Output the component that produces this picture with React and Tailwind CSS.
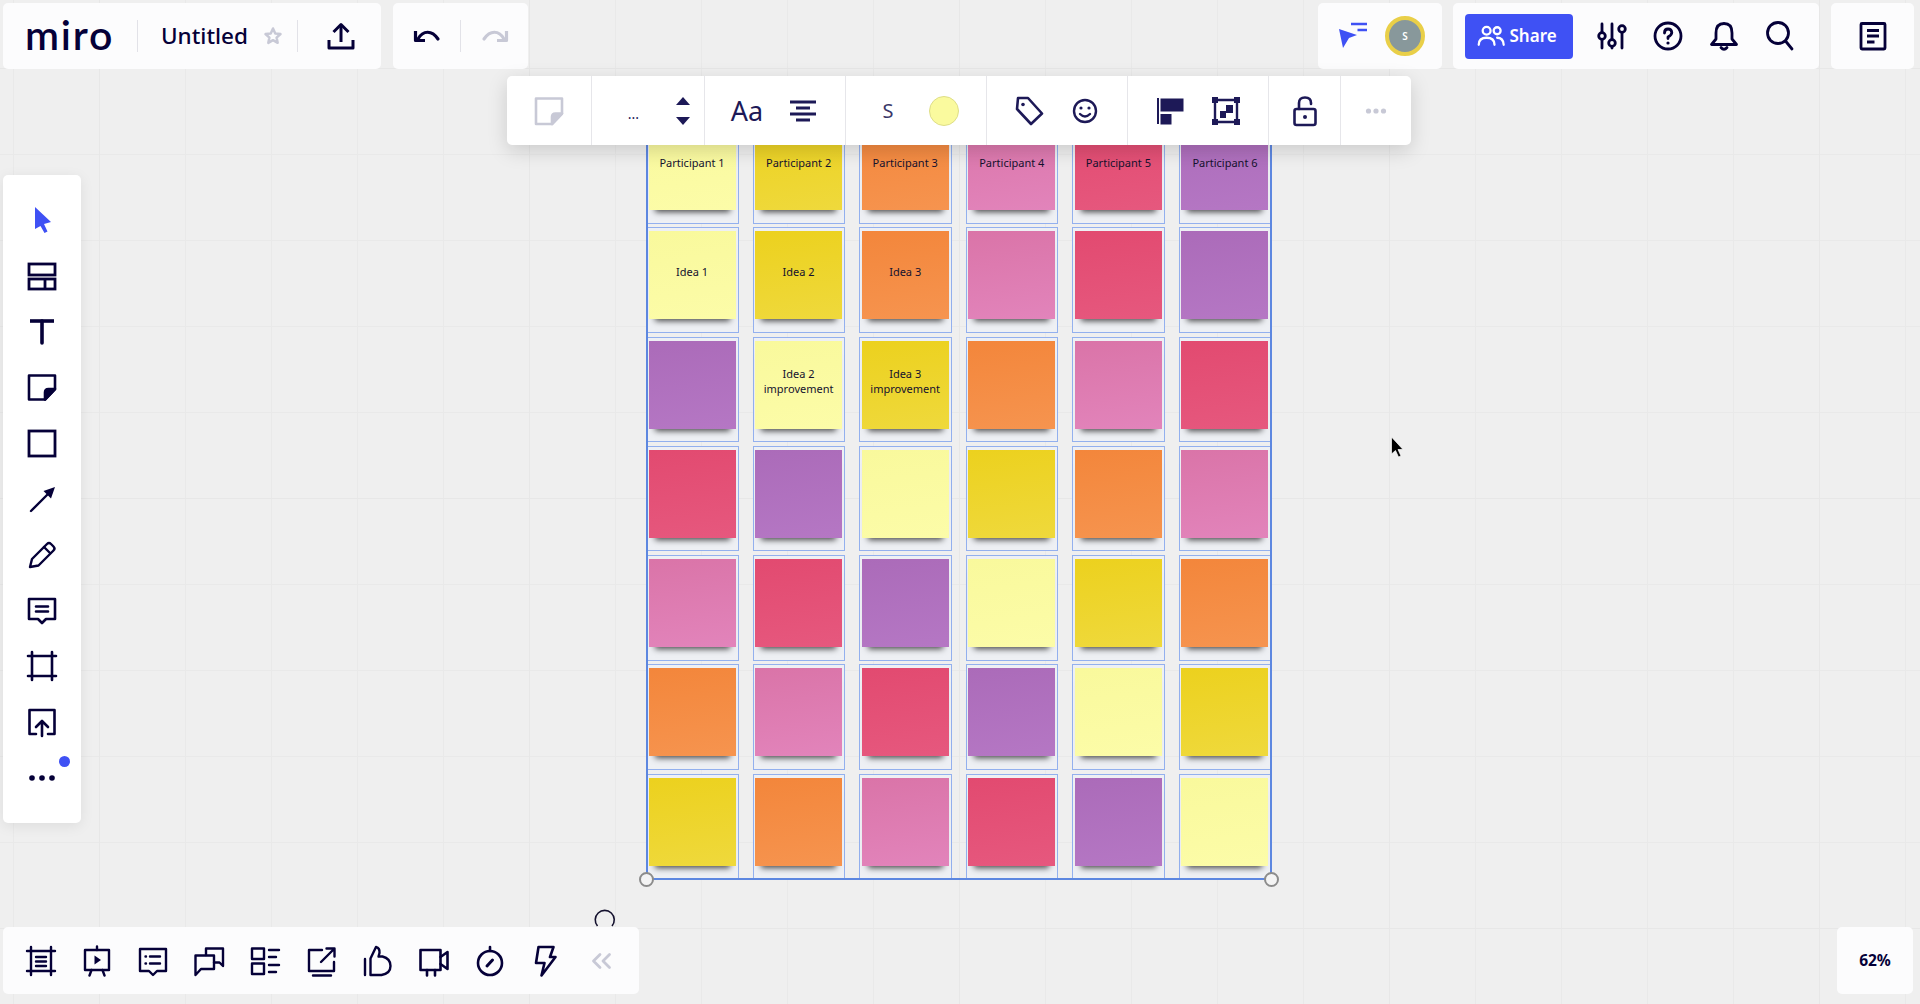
import React from "react";

const Ic = ({ children, size = 32, cls = "", color = "#050038", sw = 2.6 }) => (
  <svg width={size} height={size} viewBox="0 0 32 32" fill="none" stroke={color} strokeWidth={sw} strokeLinecap="round" strokeLinejoin="round" className={"shrink-0 " + cls}>
    {children}
  </svg>
);

const DARK = "#050038";
const BLUE = "#3f51f4";
const CTX = "#1d1957";
const GRAY = "#c8c9d6";

const icons = {
  cursor: <Ic><path d="M9 3 25 18 18 20 21.5 27.5 18.5 29 14.5 22 9 25Z" fill={BLUE} stroke="none" /></Ic>,
  layouts: <Ic sw={2.8}><g strokeLinecap="butt" strokeLinejoin="miter"><rect x="3" y="4" width="26" height="11" /><rect x="3" y="19" width="26" height="10" /><path d="M19 19v10" /></g></Ic>,
  text: <Ic sw={3.6}><g strokeLinecap="butt"><path d="M4 6h24" /><path d="M16 6v22" strokeLinecap="round" /></g></Ic>,
  sticky: <Ic sw={2.6}><path d="M3 4.5h26v13.5L19 28.5H3Z" /><path d="M29 18 19 28.5v-7q0-3.5 3.500-3.500Z" fill={DARK} /></Ic>,
  rect: <Ic sw={2.8}><rect x="3" y="4" width="26" height="25" strokeLinejoin="miter" /></Ic>,
  arrow: <Ic sw={2.4}><path d="M5 28 22 11" /><path d="M29 4 17.500 8 25 15.500Z" fill={DARK} stroke="none" /></Ic>,
  pen: <Ic sw={2.4}><path d="M4 28l2-8L21 5q2-2 4 0l2.500 2.500q2 2 0 4L12.500 26.500Z" /><path d="M18 8l6 6" /></Ic>,
  comment: <Ic sw={2.6}><path d="M3 5h26v20H20l-4 4-4-4H3Z" /><path d="M10 12.500h12M10 17.500h12" /></Ic>,
  frame: <Ic sw={2.6}><path d="M6 2v28M26 2v28M2 6h28M2 26h28" /></Ic>,
  embed: <Ic sw={2.6}><path d="M10 28H3.500V4h25v24H22" /><path d="M16 30V15M10 21l6-6 6 6" /></Ic>,
  dots: <Ic><g fill={DARK} stroke="none"><circle cx="6" cy="16" r="2.800" /><circle cx="16" cy="16" r="2.800" /><circle cx="26" cy="16" r="2.800" /></g></Ic>,
  frameList: <Ic sw={2.4}><path d="M6 2v28M26 2v28M2 6h28M2 26h28M11 12h10M11 16.500h10M11 21h10" /></Ic>,
  present: <Ic sw={2.4}><rect x="4" y="5" width="24" height="20" /><path d="M16 1.500V5M10.500 25l-2 5.500M21.500 25l2 5.500" /><path d="M13.500 10.500 20 15l-6.500 4.500Z" fill={DARK} stroke="none" /></Ic>,
  notes: <Ic sw={2.4}><path d="M3 4h26v22H20l-4 4-4-4H3Z" /><path d="M13 11.500h10M13 18.500h10M8.500 11.500h.5M8.500 18.500h.5" /></Ic>,
  chats: <Ic sw={2.4}><path d="M13 10V3.500h17V21l-3.500-3.500H21" /><path d="M2.500 30V10.500H21V24H8Z" /></Ic>,
  list: <Ic sw={2.4}><rect x="3" y="3.500" width="12" height="10.500" /><rect x="3" y="18.500" width="12" height="10.500" /><path d="M20 5h10M20 12h7M20 20h10M20 27h7" /></Ic>,
  share: <Ic sw={2.4}><path d="M28 17v9H3V5h13" /><path d="M15 17 28.500 3.500M20.500 3.500h8v8M7 30.500h18" /></Ic>,
  thumb: <Ic sw={2.4}><path d="M3 14v16M8.500 30V13.500L14 2q4 1 3.500 6l-1 3.500h4q8 2 8 9.500t-9 9Z" /></Ic>,
  video: <Ic sw={2.6}><rect x="2.500" y="5" width="20" height="20" /><path d="M22.500 12 29.500 7v17l-7-5M9 25v5.500M17 25v5.500" /></Ic>,
  timer: <Ic sw={2.6}><circle cx="16" cy="18" r="12" /><path d="M16 2v4" /><path d="M13 21l5.500-6" strokeWidth="3" /></Ic>,
  bolt: <Ic sw={2.6}><path d="M8.500 2h15l-3.500 10h5.500L11.500 30.500 14.500 18H6Z" /></Ic>,
  chev: <Ic color={GRAY} sw={2.8}><path d="M14 9.500 7.500 16l6.500 6.500M23.500 9.500 17 16l6.500 6.500" /></Ic>,
};

const leftTools = ["cursor", "layouts", "text", "sticky", "rect", "arrow", "pen", "comment", "frame", "embed", "dots"];
const bottomTools = ["frameList", "present", "notes", "chats", "list", "share", "thumb", "video", "timer", "bolt", "chev"];

const LY = "bg-[linear-gradient(172deg,#f9f99c,#fcfca8)]";
const Y = "bg-[linear-gradient(172deg,#ecd11e,#efd93c)]";
const O = "bg-[linear-gradient(172deg,#f3863b,#f6944f)]";
const P = "bg-[linear-gradient(172deg,#da74a8,#e284bb)]";
const R = "bg-[linear-gradient(172deg,#e24a70,#e6587e)]";
const V = "bg-[linear-gradient(172deg,#ab6bb9,#b577c4)]";

const rows = [
  [[LY, "Participant 1"], [Y, "Participant 2"], [O, "Participant 3"], [P, "Participant 4"], [R, "Participant 5"], [V, "Participant 6"]],
  [[LY, "Idea 1"], [Y, "Idea 2"], [O, "Idea 3"], [P], [R], [V]],
  [[V], [LY, "Idea 2 improvement"], [Y, "Idea 3 improvement"], [O], [P], [R]],
  [[R], [V], [LY], [Y], [O], [P]],
  [[P], [R], [V], [LY], [Y], [O]],
  [[O], [P], [R], [V], [LY], [Y]],
  [[Y], [O], [P], [R], [V], [LY]],
];

const Sep = () => <div className="w-px h-[32px] bg-[#e2e2e8] shrink-0" />;
const panel = "absolute bg-[#fcfcfd] rounded-[5px] flex items-center";

const Seg = ({ w, children }) => (
  <div className={"h-full flex items-center justify-center border-r border-[#e6e6ea] " + w}>{children}</div>
);
const Cell56 = ({ children }) => <div className="w-[56px] flex items-center justify-center">{children}</div>;

export default function App() {
  return (
    <div className="relative w-[1920px] h-[1004px] overflow-hidden font-['Noto_Sans','Open_Sans',sans-serif] text-[#050038] bg-[#efefef] bg-[linear-gradient(#e7e7e7_1px,transparent_1px),linear-gradient(90deg,#e7e7e7_1px,transparent_1px),linear-gradient(#e9e9e9_1px,transparent_1px),linear-gradient(90deg,#e9e9e9_1px,transparent_1px)] bg-[size:430px_430px,430px_430px,86px_86px,86px_86px] bg-[position:0_68px,99px_0,0_68px,13px_0]">
      {/* Board */}
      <div className="absolute left-[646px] top-[118px] w-[625.500px] h-[762px]">
        <div className="grid grid-cols-[repeat(6,92.500px)] gap-x-[14.100px] auto-rows-[105.500px] gap-y-[3.800px]">
          {rows.flat().map(([bg, label], i) => (
            <div key={i} className="border-[1.500px] border-[#93b0ee] bg-[#eef0f4] pl-[1.500px] pt-[3px]">
              <div className={"w-[87px] h-[88px] flex items-center justify-center text-center pb-[7px] text-[11px] leading-[15px] text-[#14112e] shadow-[0_8px_6px_-6px_rgba(0,0,0,0.7)] " + bg}>
                <span className={label && label.includes("improvement") ? "w-[80px]" : ""}>{label}</span>
              </div>
            </div>
          ))}
        </div>
        <div className="absolute inset-0 border-2 border-[#5d87e0] pointer-events-none" />
        <div className="absolute left-[-7px] bottom-[-7px] w-[15px] h-[15px] rounded-full bg-[#f4f4f4] border-2 border-[#8c8c8c]" />
        <div className="absolute right-[-7px] bottom-[-7px] w-[15px] h-[15px] rounded-full bg-[#f4f4f4] border-2 border-[#8c8c8c]" />
      </div>

      {/* Mouse pointer */}
      <svg width="14" height="23" viewBox="0 0 14 23" className="absolute left-[1390px] top-[436px]">
        <path d="M1.500 1v17l4-3.500 3 6.500 2.500-1-3-6.500h5Z" fill="#000" stroke="#fff" strokeWidth="0.700" />
      </svg>

      {/* Loading spinner */}
      <svg width="24" height="24" viewBox="0 0 24 24" className="absolute left-[593px] top-[908px]">
        <path d="M4.500 18A9.500 9.500 0 1 1 19 18" fill="none" stroke="#14112e" strokeWidth="1.600" />
      </svg>

      {/* Top-left */}
      <div className={panel + " left-[3px] top-[3px] w-[378px] h-[66px]"}>
        <div className="w-[134px] pl-[22px] text-[41px] leading-none font-['Lato',sans-serif] font-semibold tracking-[1.8px] pb-[4px]">miro</div>
        <Sep />
        <div className="pl-[23px] w-[127px] text-[22.500px] font-medium leading-none">Untitled</div>
        <svg width="20" height="20" viewBox="0 0 24 24" className="shrink-0 -ml-[2px]">
          <path d="M12 3l2.700 5.900 6.300.7-4.700 4.300 1.300 6.300L12 17l-5.600 3.200 1.300-6.300L3 9.600l6.300-.7Z" fill="none" stroke={GRAY} strokeWidth="3" strokeLinejoin="round" />
        </svg>
        <div className="w-[14px]" />
        <Sep />
        <div className="flex-1 flex justify-center pl-[2px]">
          <Ic sw={3}><g strokeLinecap="butt"><path d="M16 22V5" /><path d="M8.500 12 16 4.500l7.500 7.500" /><path d="M4 20v8h24v-8" /></g></Ic>
        </div>
      </div>
      <div className={panel + " left-[393px] top-[3px] w-[135px] h-[66px]"}>
        <div className="w-[67px] flex justify-center">
          <Ic sw={3.200}><path d="M7 19C12 10 21 10 27 19" /><path d="M4.500 11v9.500h9.500" strokeLinecap="butt" /></Ic>
        </div>
        <Sep />
        <div className="flex-1 flex justify-center">
          <Ic sw={3.200} color={GRAY}><path d="M25 19C20 10 11 10 5 19" /><path d="M27.500 11v9.500H18" strokeLinecap="butt" /></Ic>
        </div>
      </div>

      {/* Top-right */}
      <div className={panel + " left-[1318px] top-[3px] w-[123.500px] h-[66px] pl-[19px] gap-[16px]"}>
        <Ic>
          <path d="M2 9 20 15 12 18 6 28Z" fill={BLUE} stroke="none" />
          <path d="M14 4h16M20.500 10H30" stroke={BLUE} strokeWidth="2.400" strokeLinecap="butt" />
        </Ic>
        <div className="w-[40px] h-[40px] rounded-full bg-[#88989b] border-[4px] border-[#e9cf48] flex items-center justify-center text-white text-[10px] font-semibold">S</div>
      </div>
      <div className={panel + " left-[1453px] top-[3px] w-[366px] h-[66px] pl-[11.500px]"}>
        <div className="w-[108.500px] h-[45px] bg-[#3f51f4] rounded-[4px] flex items-center pl-[12px] gap-[5px] text-white text-[17px] font-semibold">
          <Ic size={28} color="#fff" sw={2.600}>
            <circle cx="11" cy="10" r="4.500" /><circle cx="23" cy="10" r="4" />
            <path d="M2 26q0-8 9-8t9 8M23 18q7 0 7.500 8" />
          </Ic>
          <span>Share</span>
        </div>
        <div className="flex ml-[11px]">
          <div className="w-[56px] flex justify-center">
            <Ic sw={2.800}>
              <path d="M6 4v8.500M6 19.500V28M16 4v15.500M16 26.500V28M26 12.500V28" />
              <circle cx="6" cy="16" r="3.300" /><circle cx="16" cy="23" r="3.300" /><circle cx="26" cy="9" r="3.300" />
            </Ic>
          </div>
          <div className="w-[56px] flex justify-center">
            <Ic sw={2.800}>
              <circle cx="16" cy="16" r="13" />
              <path d="M12.500 13q0-4 3.500-4t3.800 3.500q0 2.500-3.800 4.500v1.500" />
              <circle cx="16" cy="23" r="1.600" fill={DARK} stroke="none" />
            </Ic>
          </div>
          <div className="w-[56px] flex justify-center">
            <Ic sw={2.800}><path d="M16 3.500q-8 0-8 9.500v6l-4.500 5.500h25L24 19v-6q0-9.500-8-9.500Z" /><path d="M13 27.500q3 3.500 6 0" /></Ic>
          </div>
          <div className="w-[56px] flex justify-center">
            <Ic sw={2.800}><circle cx="14" cy="13" r="10.500" /><path d="M21.500 21 28 29" /></Ic>
          </div>
        </div>
      </div>
      <div className={panel + " left-[1831px] top-[3px] w-[83px] h-[66px] justify-center"}>
        <Ic sw={2.800}><rect x="4" y="3.500" width="24" height="25.500" rx="1" /><path d="M10 10.500h12M10 16h12M10 22h7.500" strokeLinecap="butt" /></Ic>
      </div>

      {/* Context toolbar */}
      <div className="absolute left-[507px] top-[76px] w-[904px] h-[69px] bg-white rounded-[5px] flex items-center shadow-[0_6px_20px_rgba(0,0,0,0.15)]">
        <Seg w="w-[84.500px]">
          <Ic color={GRAY} sw={2.600}><path d="M3 3.500h26v15L19 29H3Z" /><path d="M29 18.500 19 29v-7q0-3.500 3.500-3.500Z" fill={GRAY} /></Ic>
        </Seg>
        <div className="w-[113.500px] h-full flex items-center border-r border-[#e6e6ea] pl-[14px]">
          <div className="w-[56px] text-center text-[14px] leading-none pt-[6px] text-[#1d1957]">...</div>
          <div className="ml-[7.500px] w-[28px] flex flex-col items-center gap-[12px]">
            <svg width="14" height="8" viewBox="0 0 14 8"><path d="M7 0 14 8H0Z" fill={CTX} /></svg>
            <svg width="14" height="8" viewBox="0 0 14 8"><path d="M0 0H14L7 8Z" fill={CTX} /></svg>
          </div>
        </div>
        <Seg w="w-[141px]">
          <Cell56><span className="text-[27px] leading-none text-[#1d1957]">Aa</span></Cell56>
          <Cell56><Ic color={CTX} sw={2.800}><path d="M3 7h26M9 13h14M3 19h26M9 25h14" strokeLinecap="butt" /></Ic></Cell56>
        </Seg>
        <Seg w="w-[141px]">
          <Cell56><span className="text-[20px] leading-none text-[#3b3868]">S</span></Cell56>
          <Cell56><div className="w-[30px] h-[30px] rounded-full bg-[#fafa9e] border border-[#dede88]" /></Cell56>
        </Seg>
        <Seg w="w-[141px]">
          <Cell56><Ic color={CTX} sw={2.600}><path d="M5 3h10l14 15.500L18 29 4 14Z" /><circle cx="10" cy="9.500" r="1.800" fill={CTX} stroke="none" /></Ic></Cell56>
          <Cell56><Ic color={CTX} sw={2.400}><circle cx="16" cy="16" r="11" /><circle cx="12" cy="13" r="1.600" fill={CTX} stroke="none" /><circle cx="20" cy="13" r="1.600" fill={CTX} stroke="none" /><path d="M11 19q5 5 10 0" /></Ic></Cell56>
        </Seg>
        <Seg w="w-[141px]">
          <Cell56><Ic color={CTX} sw={2}><path d="M4 3v26" strokeLinecap="butt" /><rect x="6.500" y="3.500" width="23" height="13" fill={CTX} stroke="none" /><rect x="6.500" y="19" width="11" height="10.500" fill={CTX} stroke="none" /></Ic></Cell56>
          <Cell56><Ic color={CTX} sw={2.400}>
            <rect x="5" y="5" width="22" height="22" />
            <g fill={CTX} stroke="none">
              <rect x="2" y="2" width="6" height="6" /><rect x="24" y="2" width="6" height="6" /><rect x="2" y="24" width="6" height="6" /><rect x="24" y="24" width="6" height="6" />
              <rect x="16" y="10" width="7" height="8" /><rect x="10" y="16" width="6" height="7" />
            </g>
          </Ic></Cell56>
        </Seg>
        <Seg w="w-[72px]">
          <Ic color={CTX} sw={2.600}><rect x="5.500" y="14" width="21" height="16" rx="2" /><path d="M10 14V8q0-5.500 6-5.500t6 5.500v1" /><circle cx="16" cy="22" r="2" fill={CTX} stroke="none" /></Ic>
        </Seg>
        <div className="flex-1 flex justify-center">
          <Ic><g fill={GRAY} stroke="none"><circle cx="8.500" cy="16" r="2.600" /><circle cx="16" cy="16" r="2.600" /><circle cx="23.500" cy="16" r="2.600" /></g></Ic>
        </div>
      </div>

      {/* Left toolbar */}
      <div className="absolute left-[3px] top-[175px] w-[78px] h-[648px] bg-white rounded-[5px] flex flex-col py-[17px] shadow-[0_3px_14px_rgba(0,0,0,0.08)]">
        {leftTools.map((k) => (
          <div key={k} className="h-[55.800px] flex items-center justify-center shrink-0">{icons[k]}</div>
        ))}
        <div className="absolute left-[56px] top-[581px] w-[11px] h-[11px] rounded-full bg-[#3f51f4]" />
      </div>

      {/* Bottom toolbar */}
      <div className={panel + " left-[3px] top-[927px] w-[636px] h-[67px] pl-[10px]"}>
        {bottomTools.map((k) => (
          <div key={k} className="w-[56.100px] flex items-center justify-center shrink-0">{icons[k]}</div>
        ))}
      </div>

      {/* Zoom level */}
      <div className={panel + " left-[1837px] top-[927px] w-[76px] h-[67px] justify-center text-[15.500px] font-bold"}>62%</div>
    </div>
  );
}
